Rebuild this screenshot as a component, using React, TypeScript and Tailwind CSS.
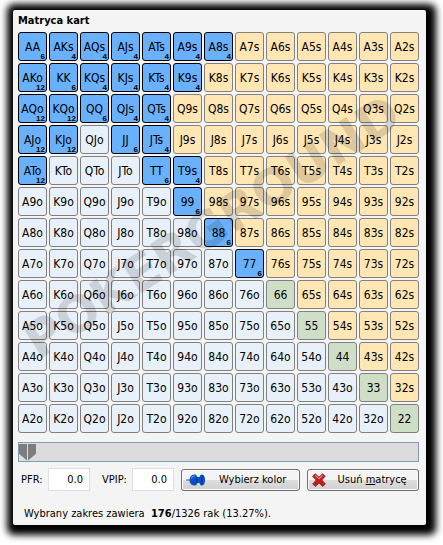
import { useState } from 'react';
import clsx from 'clsx';

const RANKS = ['A', 'K', 'Q', 'J', 'T', '9', '8', '7', '6', '5', '4', '3', '2'];

const INITIAL_RANGE = [
  'AA', 'AKs', 'AQs', 'AJs', 'ATs', 'A9s', 'A8s',
  'AKo', 'KK', 'KQs', 'KJs', 'KTs', 'K9s',
  'AQo', 'KQo', 'QQ', 'QJs', 'QTs',
  'AJo', 'KJo', 'JJ', 'JTs',
  'ATo', 'TT', 'T9s',
  '99', '88', '77'
];

function handName(row: number, col: number) {
  if (row === col) return RANKS[row] + RANKS[col];
  return row < col ? `${RANKS[row]}${RANKS[col]}s` : `${RANKS[col]}${RANKS[row]}o`;
}

function combos(hand: string) {
  if (hand.length === 2) return 6;
  return hand.endsWith('s') ? 4 : 12;
}

const HANDS = RANKS.flatMap((_, row) => RANKS.map((_, col) => handName(row, col)));

interface HandCellProps {
  hand: string;
  selected: boolean;
  onToggle: (hand: string) => void;
}

function HandCell({ hand, selected, onToggle }: HandCellProps) {
  return (
    <button
      type="button"
      aria-pressed={selected}
      onClick={() => onToggle(hand)}
      className={clsx(
        'relative flex h-[29px] items-center justify-center rounded-[3px] border text-xs leading-3 text-black',
        selected && 'border-black bg-[#69b1fd]',
        !selected && 'border-[#808080]',
        !selected && hand.length === 2 && 'bg-[#cfdfc7]',
        !selected && hand.endsWith('s') && 'bg-[#ffe6b3]',
        !selected && hand.endsWith('o') && 'bg-[#e8f1fa]'
      )}
    >
      {hand}
      {selected && (
        <span className="absolute right-px bottom-0 font-['Liberation_Sans',sans-serif] text-[8px] leading-[7px] font-bold">
          {combos(hand)}
        </span>
      )}
    </button>
  );
}

const thumbBase =
  'pointer-events-none absolute inset-y-0 h-full appearance-none bg-transparent [&::-webkit-slider-thumb]:pointer-events-auto [&::-webkit-slider-thumb]:h-[17px] [&::-webkit-slider-thumb]:w-2 [&::-webkit-slider-thumb]:appearance-none [&::-webkit-slider-thumb]:bg-[#7d7d7d]';

function PinIcon() {
  return (
    <svg width="20" height="12" viewBox="0 0 20 12" aria-hidden="true">
      <path d="M0 6h6" stroke="#6f8197" strokeWidth="1.4" />
      <path d="M4 3.5C5 1 7 0.3 9 .5c1.600.2 2 1.500 2.200 2.500h2.300C14 1 15 .3 16.300.5 18.300 1 19 3.300 19 6s-.7 5-2.700 5.500C15 11.700 14 11 13.500 9h-2.300C11 10 10.600 11.300 9 11.500 7 11.700 5 11 4 8.500c-.8-1.600-.8-3.400 0-5z" fill="#0b4fc4" />
      <path d="M5 4.500c1-2 2.500-2.500 4-2.300" fill="none" stroke="#3f97ee" strokeWidth="1.400" />
      <path d="M11 9V3M16.500 10.500c-1.200-2-1.200-7 0-9" stroke="#06318c" strokeWidth="1" fill="none" />
    </svg>
  );
}

function CrossIcon() {
  return (
    <svg width="14" height="14" viewBox="0 0 14 14" aria-hidden="true">
      <path d="M3.200.8 7 4.200 10.600.8l2.600 2.500L9.800 7l3.600 4-2.700 2.400L7 10l-3.600 3.400L.7 11l3.500-4L.6 3.300z" fill="#c01f22" stroke="#8f1518" strokeWidth=".8" />
      <path d="M3 2.200 7 5.800l3.700-3.500" fill="none" stroke="#e88081" strokeWidth="1.200" />
    </svg>
  );
}

const buttonStyle =
  'flex h-[22px] items-center rounded-[3px] border border-[#707070] bg-linear-to-b from-[#f4f4f4] from-50% via-[#dedede] via-50% to-[#d0d0d0] pl-1 inset-shadow-[0_0_0_1px_#fafafa]';

export default function App() {
  const [range, setRange] = useState<string[]>(INITIAL_RANGE);
  const [pfr, setPfr] = useState('0.0');
  const [vpip, setVpip] = useState('0.0');
  const [low, setLow] = useState(0);
  const [high, setHigh] = useState(0);

  const total = range.reduce((sum, hand) => sum + combos(hand), 0);

  const toggleHand = (hand: string) => {
    setRange((prev) => (prev.includes(hand) ? prev.filter((h) => h !== hand) : [...prev, hand]));
  };

  return (
    <div className="min-h-screen overflow-hidden bg-white pt-[10px] pr-[17px] pb-5 pl-[13px] font-['DejaVu_Sans_Condensed','DejaVu_Sans',sans-serif] text-[11px] leading-4 text-black">
      <main className="relative rounded-[2px] bg-[#f4f4f4] pt-[3px] pr-[7px] pb-[3px] pl-[5px] shadow-[2px_2px_7px_8px_#000]">
        <h1 className="leading-4 font-bold">Matryca kart</h1>

        {/* Hand matrix */}
        <div className="relative mt-[3px]">
          <div className="grid grid-cols-13 gap-[2px]">
            {HANDS.map((hand) => (
              <HandCell key={hand} hand={hand} selected={range.includes(hand)} onToggle={toggleHand} />
            ))}
          </div>
          <div className="pointer-events-none absolute inset-0 flex items-center justify-center pr-3 pb-3">
            <span className="-rotate-33 font-['DejaVu_Sans',sans-serif] text-[50px] leading-none font-bold text-black/13">
              POKERGROUND
            </span>
          </div>
        </div>

        {/* Percentage slider */}
        <div className="relative mt-[9px] h-5 border border-[#7f9db9] bg-[#dcdcdc]">
          <input
            type="range"
            aria-label="PFR"
            value={low}
            onChange={(e) => setLow(Number(e.target.value))}
            className={clsx(thumbBase, 'right-[9px] left-0 [&::-webkit-slider-thumb]:[clip-path:polygon(0_0,100%_0,100%_100%,0_60%)]')}
          />
          <input
            type="range"
            aria-label="VPIP"
            value={high}
            onChange={(e) => setHigh(Number(e.target.value))}
            className={clsx(thumbBase, 'right-0 left-[9px] [&::-webkit-slider-thumb]:[clip-path:polygon(0_0,100%_0,100%_60%,0_100%)]')}
          />
        </div>

        <div className="mt-[6px] flex items-center">
          <label htmlFor="pfr" className="w-[30px] pl-[3px]">PFR:</label>
          <input
            id="pfr"
            value={pfr}
            onChange={(e) => setPfr(e.target.value)}
            className="h-[23px] w-[42px] border border-[#dcdfe6] bg-white pr-[6px] text-right"
          />
          <label htmlFor="vpip" className="w-[42px] pl-3">VPIP:</label>
          <input
            id="vpip"
            value={vpip}
            onChange={(e) => setVpip(e.target.value)}
            className="h-[23px] w-[42px] border border-[#dcdfe6] bg-white pr-[6px] text-right"
          />
          <div className="ml-[7px] flex flex-1 gap-[7px]">
            <button type="button" className={clsx(buttonStyle, 'flex-15')}>
              <PinIcon />
              <span className="flex-1 text-center">Wybierz kolor</span>
            </button>
            <button type="button" onClick={() => setRange([])} className={clsx(buttonStyle, 'flex-14')}>
              <CrossIcon />
              <span className="flex-1 text-center">Usuń <u>m</u>atrycę</span>
            </button>
          </div>
        </div>

        <p className="mt-[15px] pl-[6px]">
          Wybrany zakres zawiera &nbsp;<b>{total}</b>/1326 rak ({((total / 1326) * 100).toFixed(2)}%).
        </p>
      </main>
    </div>
  );
}
